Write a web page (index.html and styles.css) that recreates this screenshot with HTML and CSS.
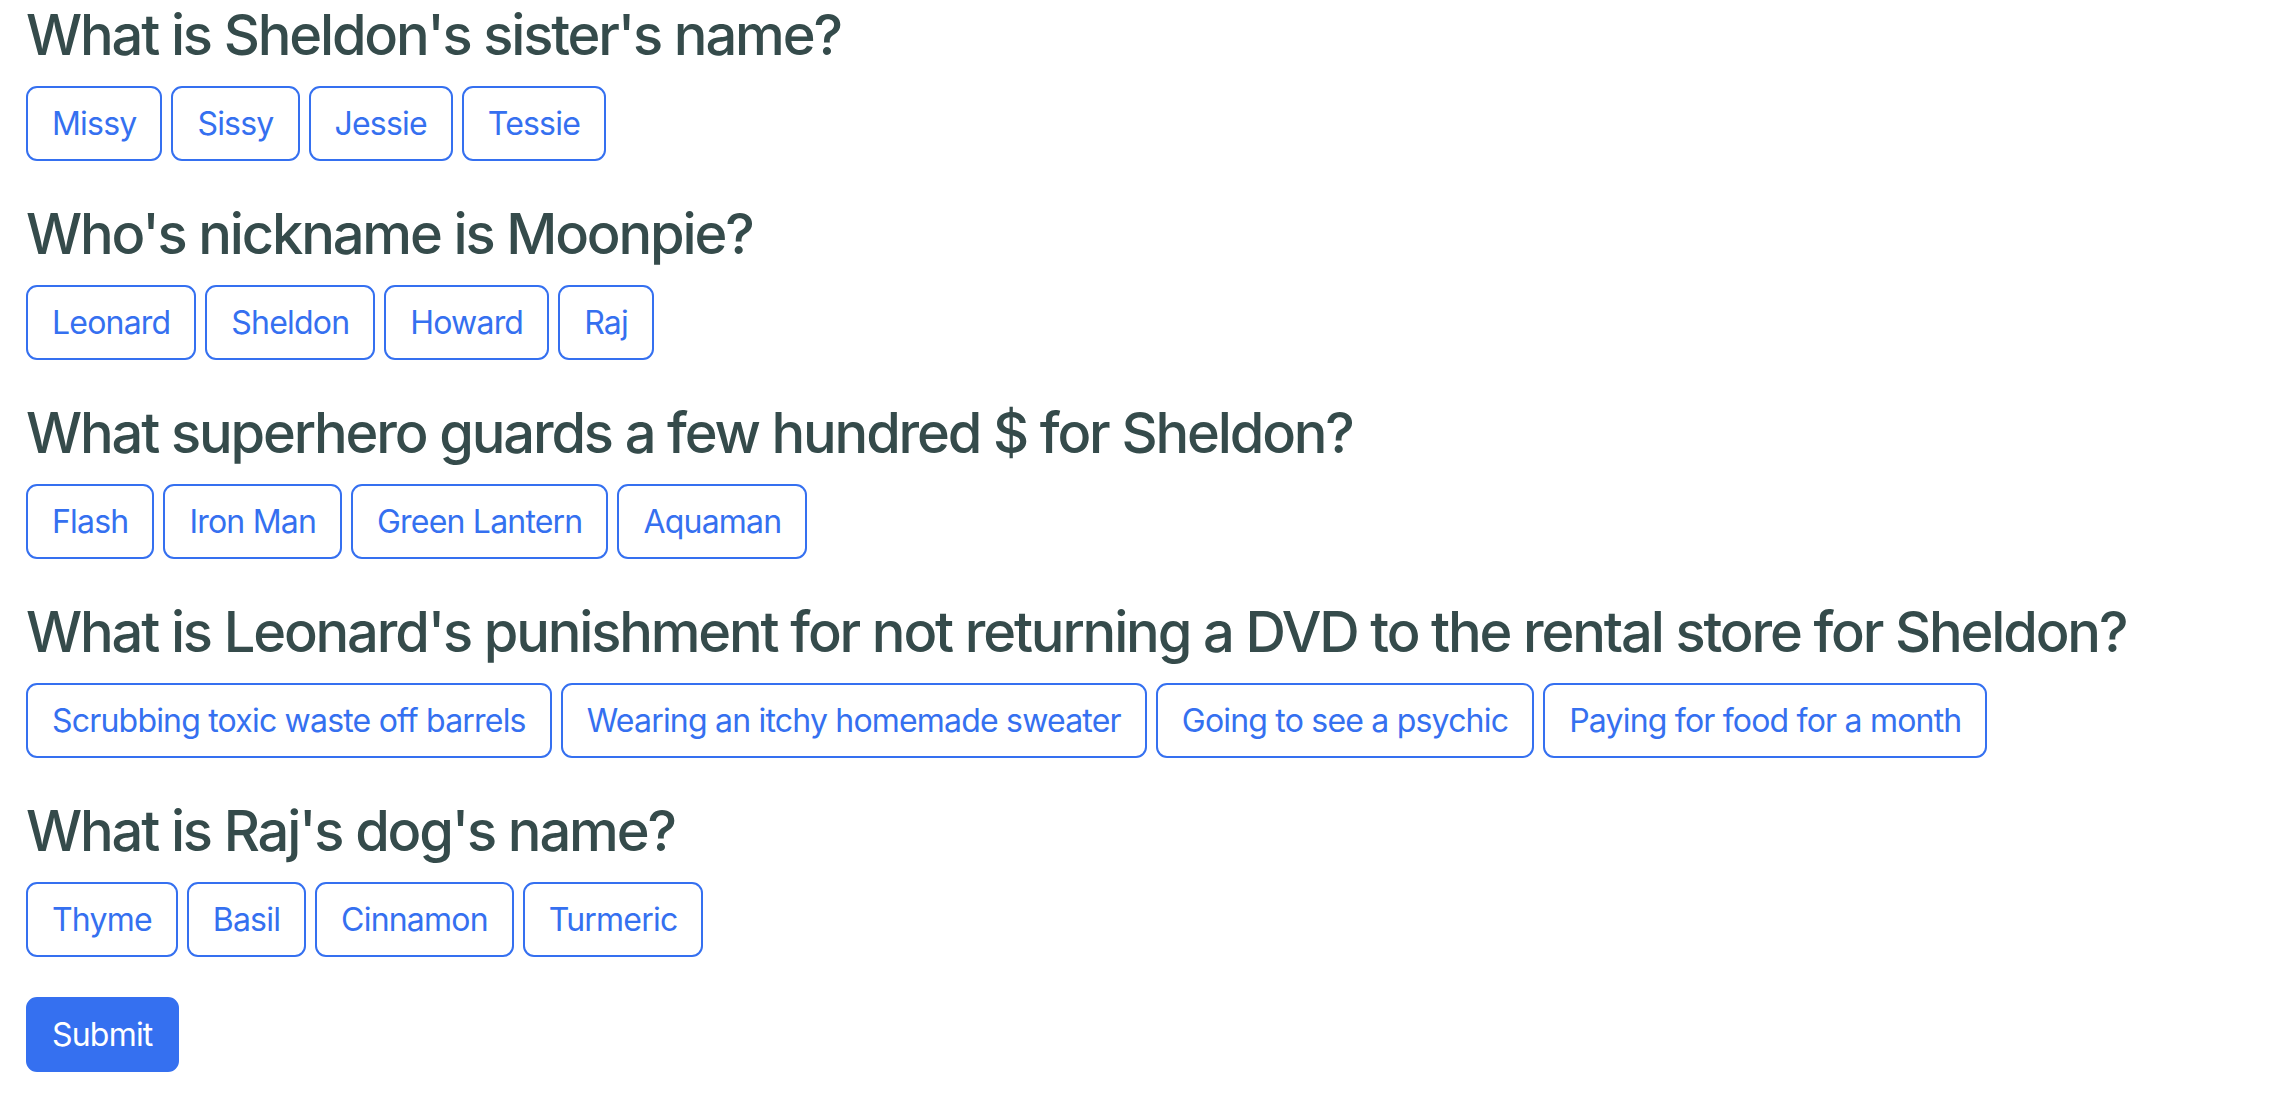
FILE: index.html
```html
<!DOCTYPE html>
<html lang="en">
<head>
<meta charset="utf-8">
<title>Big Bang Theory Quiz</title>
<link rel="stylesheet" href="styles.css">
</head>
<body>
<form class="quiz">
  <div class="question">
    <h3 class="q-title">What is Sheldon's sister's name?</h3>
    <div class="answers">
      <button type="button" class="answer">Missy</button>
      <button type="button" class="answer">Sissy</button>
      <button type="button" class="answer">Jessie</button>
      <button type="button" class="answer">Tessie</button>
    </div>
  </div>
  <div class="question">
    <h3 class="q-title">Who's nickname is Moonpie?</h3>
    <div class="answers">
      <button type="button" class="answer">Leonard</button>
      <button type="button" class="answer">Sheldon</button>
      <button type="button" class="answer">Howard</button>
      <button type="button" class="answer">Raj</button>
    </div>
  </div>
  <div class="question">
    <h3 class="q-title">What superhero guards a few hundred $ for Sheldon?</h3>
    <div class="answers">
      <button type="button" class="answer">Flash</button>
      <button type="button" class="answer">Iron Man</button>
      <button type="button" class="answer">Green Lantern</button>
      <button type="button" class="answer">Aquaman</button>
    </div>
  </div>
  <div class="question">
    <h3 class="q-title">What is Leonard's punishment for not returning a DVD to the rental store for Sheldon?</h3>
    <div class="answers">
      <button type="button" class="answer">Scrubbing toxic waste off barrels</button>
      <button type="button" class="answer">Wearing an itchy homemade sweater</button>
      <button type="button" class="answer">Going to see a psychic</button>
      <button type="button" class="answer">Paying for food for a month</button>
    </div>
  </div>
  <div class="question">
    <h3 class="q-title">What is Raj's dog's name?</h3>
    <div class="answers">
      <button type="button" class="answer">Thyme</button>
      <button type="button" class="answer">Basil</button>
      <button type="button" class="answer">Cinnamon</button>
      <button type="button" class="answer">Turmeric</button>
    </div>
  </div>
  <button type="submit" class="submit">Submit</button>
</form>
</body>
</html>
```

FILE: styles.css
```css
html, body {
  margin: 0;
  background: #ffffff;
}

body {
  font-family: Inter, "Noto Sans", "Liberation Sans", sans-serif;
  color: #212529;
}

.quiz {
  padding: 2px 26px 0;
}

.question {
  margin-bottom: 40px;
}

.q-title {
  margin: 0 0 18px;
  font-size: 56px;
  line-height: 66px;
  font-weight: 500;
  letter-spacing: -2.15px;
  color: #354b4b;
  white-space: nowrap;
}

.answers {
  display: flex;
  gap: 9px;
}

.answer,
.submit {
  font-family: inherit;
  font-size: 32px;
  line-height: 47px;
  font-weight: 400;
  letter-spacing: -0.8px;
  padding: 12px 24px;
  border: 2px solid #3570f0;
  border-radius: 11px;
  cursor: pointer;
  margin: 0;
}

.answer {
  background: #ffffff;
  color: #3570f0;
}

.submit {
  background: #3570f0;
  color: #ffffff;
}
```
